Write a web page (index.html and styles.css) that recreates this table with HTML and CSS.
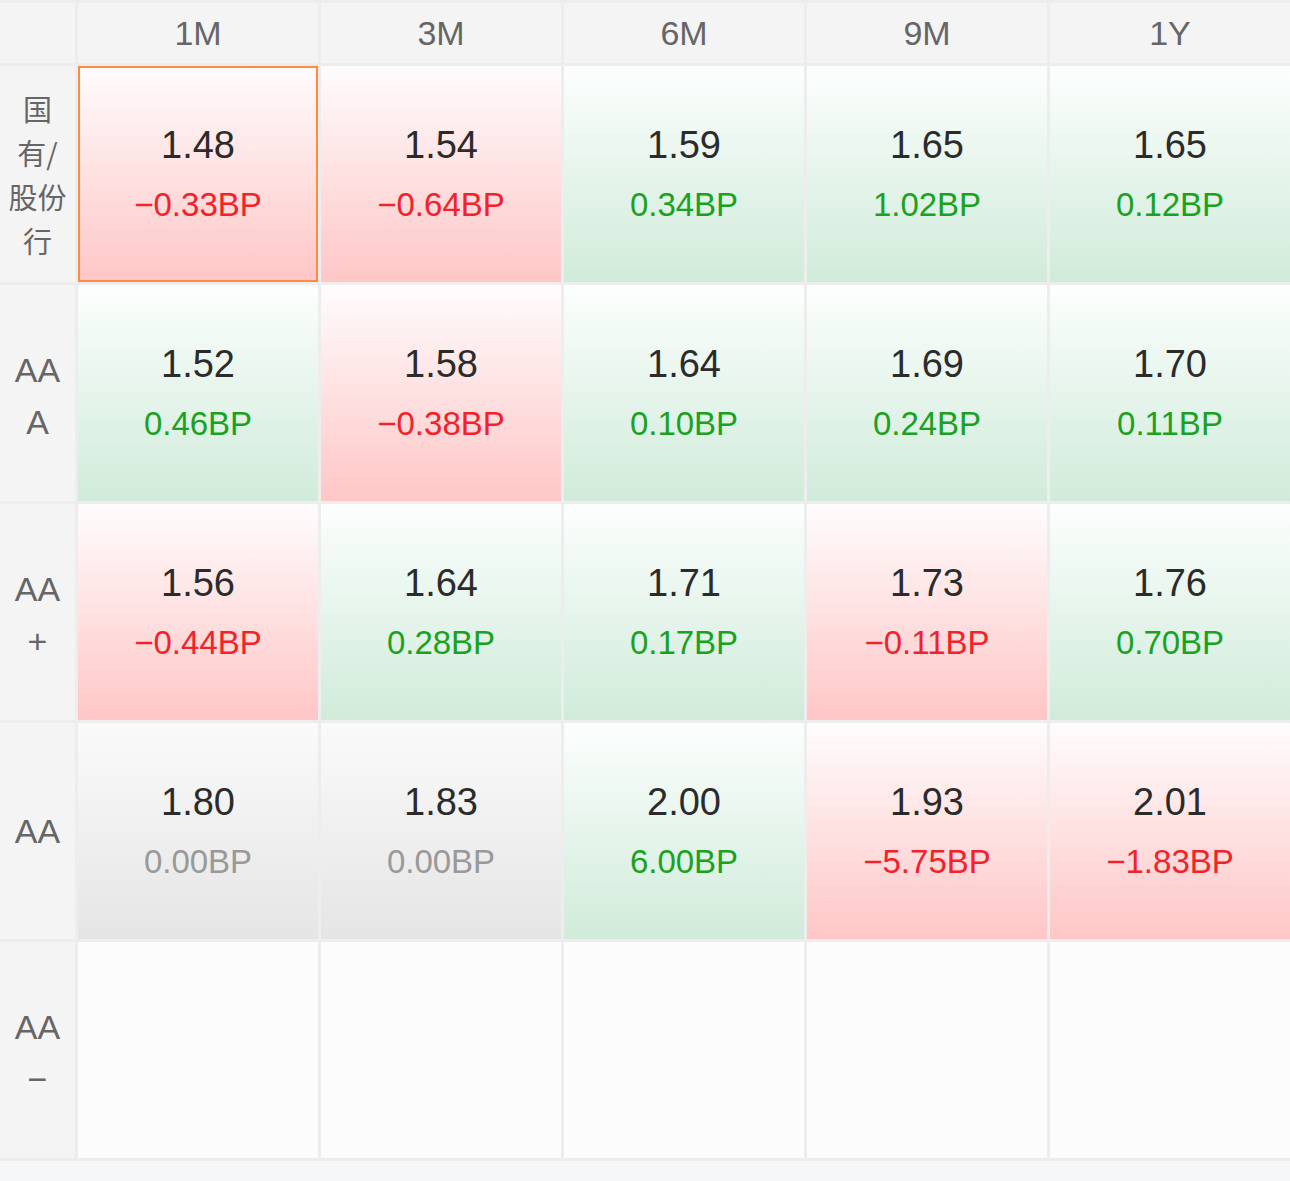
FILE: index.html
```html
<!DOCTYPE html>
<html lang="zh">
<head>
<meta charset="utf-8">
<link rel="stylesheet" href="styles.css">
</head>
<body>
<div class="board">
  <div class="grid">
    <div class="corner"></div>
    <div class="colhead">1M</div>
    <div class="colhead">3M</div>
    <div class="colhead">6M</div>
    <div class="colhead">9M</div>
    <div class="colhead">1Y</div>

    <div class="rowhead cjk">国<br>有/<br>股份<br>行</div>
    <div class="cell down selected"><span class="val">1.48</span><span class="bp">−0.33BP</span></div>
    <div class="cell down"><span class="val">1.54</span><span class="bp">−0.64BP</span></div>
    <div class="cell up"><span class="val">1.59</span><span class="bp">0.34BP</span></div>
    <div class="cell up"><span class="val">1.65</span><span class="bp">1.02BP</span></div>
    <div class="cell up"><span class="val">1.65</span><span class="bp">0.12BP</span></div>

    <div class="rowhead">AA<br>A</div>
    <div class="cell up"><span class="val">1.52</span><span class="bp">0.46BP</span></div>
    <div class="cell down"><span class="val">1.58</span><span class="bp">−0.38BP</span></div>
    <div class="cell up"><span class="val">1.64</span><span class="bp">0.10BP</span></div>
    <div class="cell up"><span class="val">1.69</span><span class="bp">0.24BP</span></div>
    <div class="cell up"><span class="val">1.70</span><span class="bp">0.11BP</span></div>

    <div class="rowhead">AA<br>+</div>
    <div class="cell down"><span class="val">1.56</span><span class="bp">−0.44BP</span></div>
    <div class="cell up"><span class="val">1.64</span><span class="bp">0.28BP</span></div>
    <div class="cell up"><span class="val">1.71</span><span class="bp">0.17BP</span></div>
    <div class="cell down"><span class="val">1.73</span><span class="bp">−0.11BP</span></div>
    <div class="cell up"><span class="val">1.76</span><span class="bp">0.70BP</span></div>

    <div class="rowhead single">AA</div>
    <div class="cell flat"><span class="val">1.80</span><span class="bp">0.00BP</span></div>
    <div class="cell flat"><span class="val">1.83</span><span class="bp">0.00BP</span></div>
    <div class="cell up"><span class="val">2.00</span><span class="bp">6.00BP</span></div>
    <div class="cell down"><span class="val">1.93</span><span class="bp">−5.75BP</span></div>
    <div class="cell down"><span class="val">2.01</span><span class="bp">−1.83BP</span></div>

    <div class="rowhead">AA<br>−</div>
    <div class="cell empty"></div>
    <div class="cell empty"></div>
    <div class="cell empty"></div>
    <div class="cell empty"></div>
    <div class="cell empty"></div>
  </div>
  <div class="footer"></div>
</div>
</body>
</html>
```

FILE: styles.css
```css
html, body {
  margin: 0;
  padding: 0;
  background: #f6f7f9;
}

body {
  font-family: "Liberation Sans", Arial, "Noto Sans CJK SC", sans-serif;
}

.board {
  width: 1290px;
  height: 1181px;
  display: flex;
  flex-direction: column;
}

.grid {
  display: grid;
  grid-template-columns: 75px repeat(5, 240px);
  grid-template-rows: 60px repeat(5, 216px);
  gap: 3px;
  padding-top: 3px;
  padding-bottom: 3px;
  background: #ededed;
}

.corner,
.colhead,
.rowhead {
  background: #f4f4f4;
}

.colhead {
  display: flex;
  align-items: center;
  justify-content: center;
  font-size: 34px;
  color: #666;
}

.rowhead {
  display: flex;
  align-items: center;
  justify-content: center;
  text-align: center;
  font-size: 34px;
  line-height: 52px;
  padding-top: 5px;
  color: #666;
}

.rowhead.single {
  padding-top: 0;
}

.rowhead.cjk {
  font-family: "Noto Sans CJK SC", sans-serif;
  font-size: 29px;
  line-height: 44px;
  padding-top: 0;
}

.cell {
  display: flex;
  flex-direction: column;
  align-items: center;
  justify-content: center;
  gap: 18px;
}

.cell.up {
  background: linear-gradient(to bottom, #fcfefd 0%, #d0ebda 100%);
}

.cell.down {
  background: linear-gradient(to bottom, #fefcfd 0%, #ffc6c6 100%);
}

.cell.flat {
  background: linear-gradient(to bottom, #fafafa 0%, #e5e5e5 100%);
}

.cell.empty {
  background: #fcfcfc;
}

.cell.selected {
  box-shadow: inset 0 0 0 2px #ff8b42;
}

.val {
  font-size: 38px;
  line-height: 44px;
  color: #2b2b2b;
}

.bp {
  font-size: 33px;
  line-height: 40px;
}

.up .bp {
  color: #19a21f;
}

.down .bp {
  color: #f2222a;
}

.flat .bp {
  color: #999;
}

.footer {
  flex: 1;
  background: #f6f7f9;
}
```
